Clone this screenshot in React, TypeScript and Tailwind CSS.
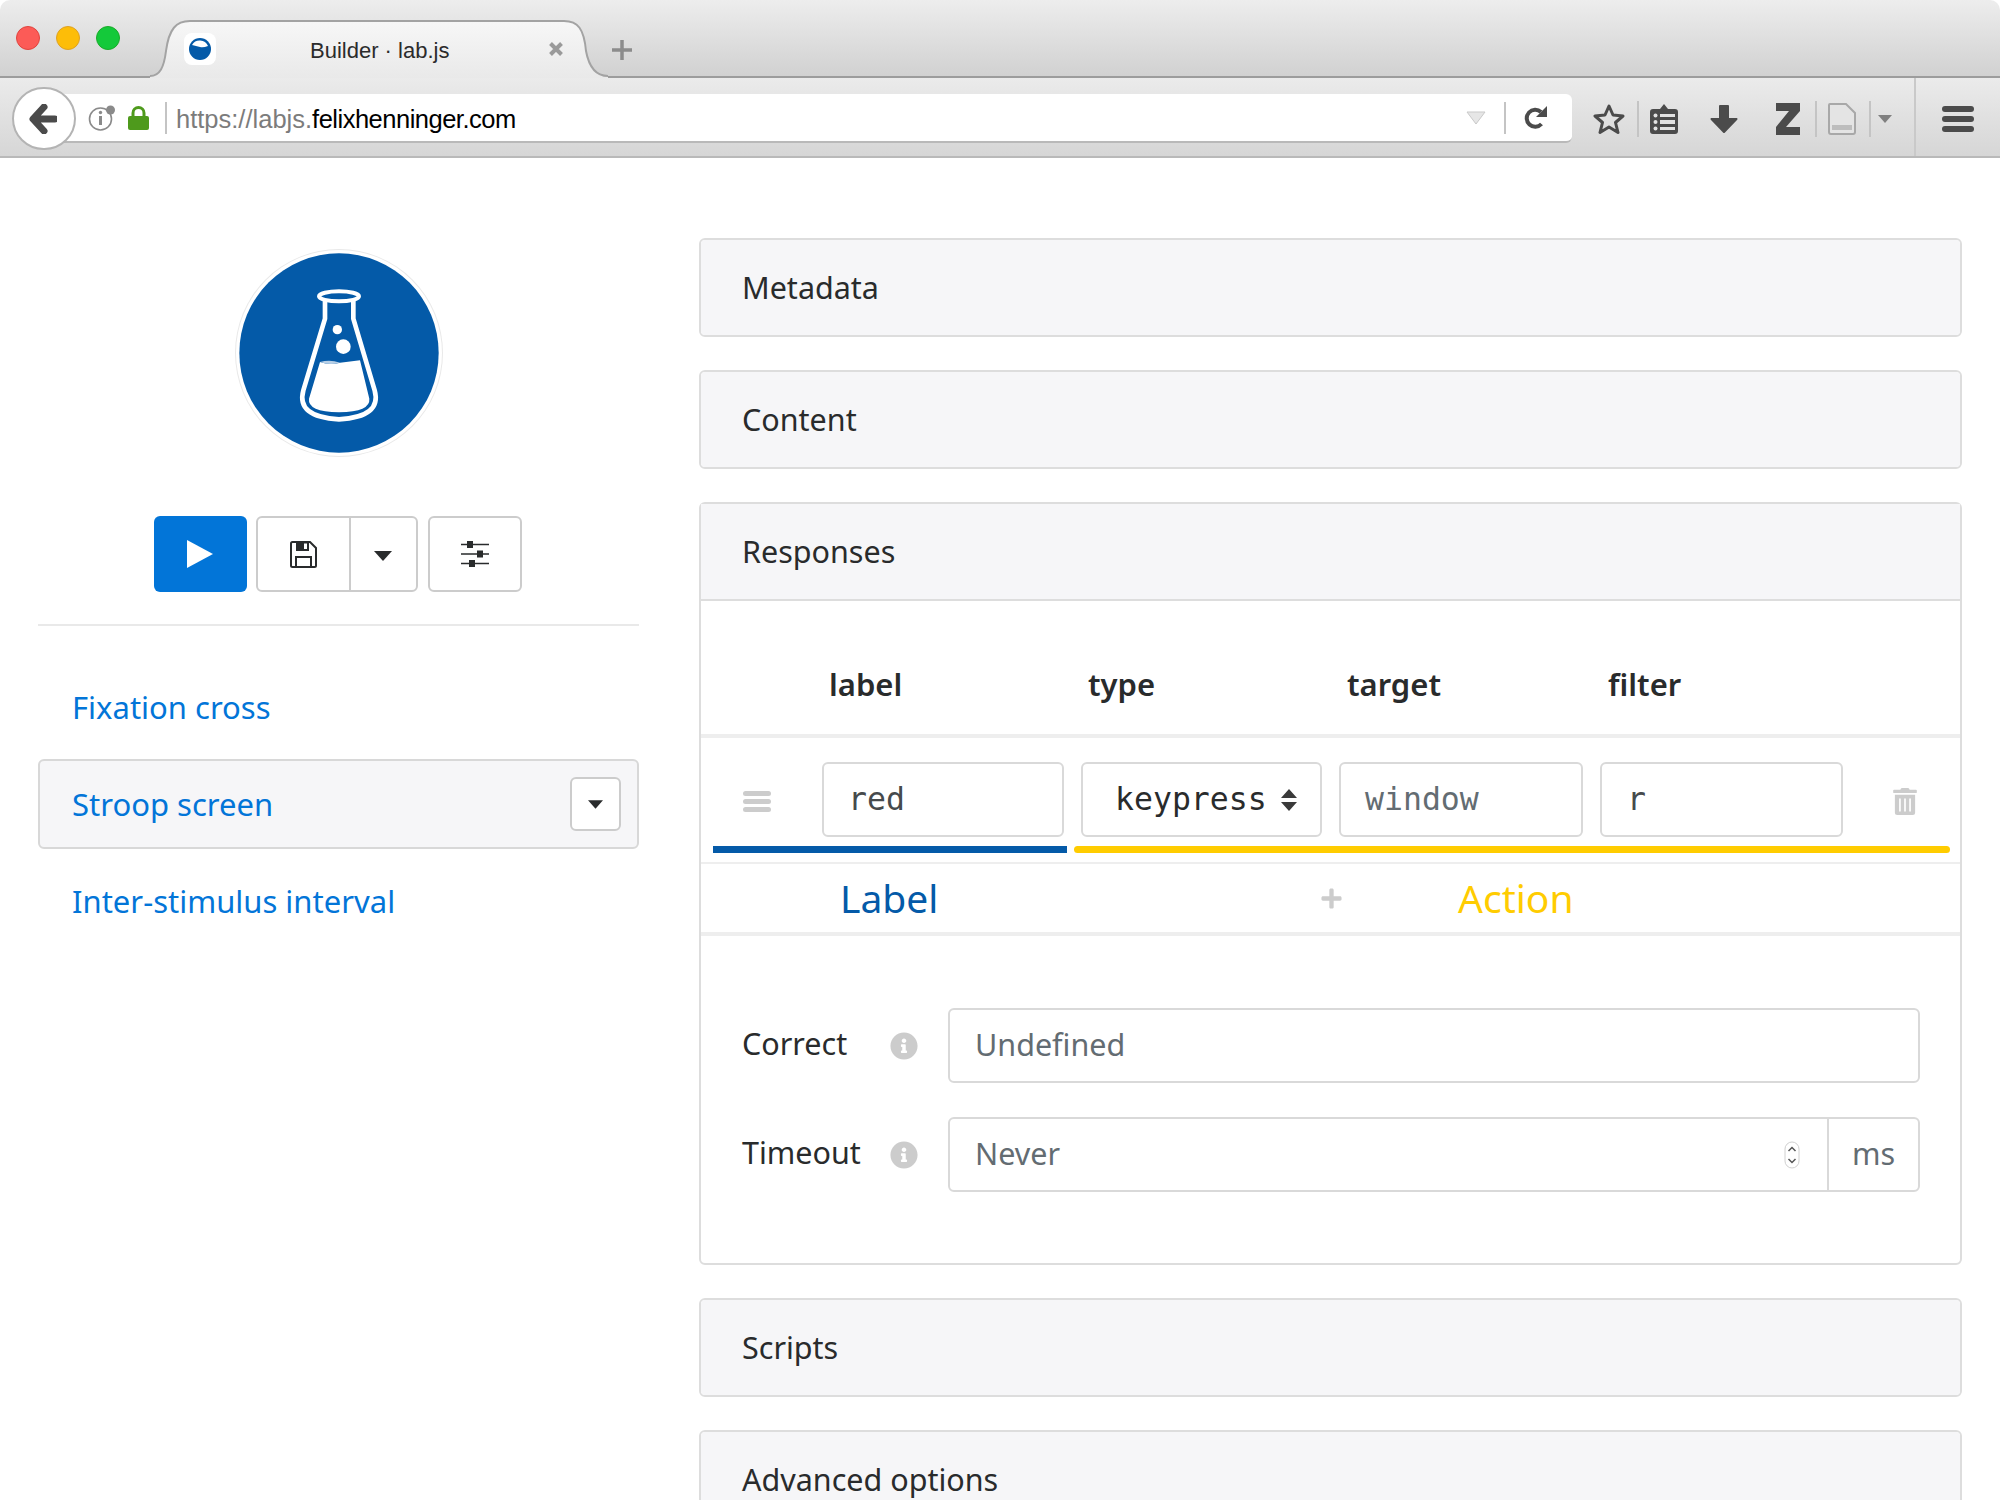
import React from "react";
import { FaInfoCircle, FaPlus, FaTrashAlt } from "react-icons/fa";

const sans = "font-['Noto_Sans',sans-serif]";

function Flask() {
  return (
    <svg viewBox="315 56 624 624" className="w-[208px] h-[208px]">
      <circle cx="627" cy="368" r="312" fill="#e9e9e9" />
      <circle cx="627" cy="368" r="309" fill="#fff" />
      <circle cx="627" cy="368" r="299" fill="#045aa8" />
      <ellipse cx="627" cy="198" rx="60" ry="15" fill="none" stroke="#fff" strokeWidth="12" />
      <path d="M585 212V265L520 480Q498 560 627 567Q756 560 734 480L670 265V212" fill="none" stroke="#fff" strokeWidth="14" />
      <path d="M570 395Q600 405 630 397L690 390L718 505Q722 544 627 546Q532 544 537 505Z" fill="#fff" />
      <path d="M570 395Q600 386 630 397Q600 406 570 395Z" fill="#b7cfe6" />
      <circle cx="622" cy="298" r="14" fill="#fff" />
      <circle cx="640" cy="349" r="22" fill="#fff" />
    </svg>
  );
}

function Caret({ className }: { className: string }) {
  return (
    <svg viewBox="0 0 18 10" className={className}>
      <path d="M0 0H18L9 10Z" fill="#292b2c" />
    </svg>
  );
}

function Floppy() {
  return (
    <svg viewBox="0 0 27 27" className="w-[27px] h-[27px]">
      <path d="M2.5 1H20L26 7V24.5Q26 26 24.5 26H2.5Q1 26 1 24.5V2.5Q1 1 2.5 1Z" fill="none" stroke="#292b2c" strokeWidth="2" />
      <path d="M6 1H19V10H6Z" fill="#292b2c" />
      <path d="M14 2.5H17V8H14Z" fill="#fff" />
      <path d="M6 26V16H21V26" fill="none" stroke="#292b2c" strokeWidth="2" />
    </svg>
  );
}

function Sliders() {
  return (
    <svg viewBox="0 0 28 26" className="w-[28px] h-[26px]">
      <path d="M0 3.5H28M0 13H28M0 22.5H28" stroke="#292b2c" strokeWidth="1.6" />
      <path d="M6 0H12V7H6ZM16 9.5H22V16.5H16ZM8 19H14V26H8Z" fill="#292b2c" />
    </svg>
  );
}

function Tab() {
  return (
    <div className="relative self-end z-10 -mb-[2px] ml-[20px] w-[478px] h-[59px] flex items-center">
      <svg viewBox="0 0 478 59" className="absolute inset-0 w-full h-full">
        <defs>
          <linearGradient id="tabfill" x1="0" y1="0" x2="0" y2="1">
            <stop offset="0" stopColor="#f7f7f7" />
            <stop offset="1" stopColor="#e9e9e9" />
          </linearGradient>
        </defs>
        <path d="M10 57C20 57 24 48 26 32C29 10 36 2 50 2H424C438 2 444 10 446 32C449 48 456 57 468 57V59H10Z" fill="url(#tabfill)" />
        <path d="M10 57C20 57 24 48 26 32C29 10 36 2 50 2H424C438 2 444 10 446 32C449 48 456 57 468 57" fill="none" stroke="#a3a3a3" strokeWidth="2" />
      </svg>
      <div className="relative ml-[44px] w-[32px] h-[32px] bg-white rounded-lg flex items-center justify-center">
        <svg viewBox="0 0 22 22" className="w-[22px] h-[22px]">
          <circle cx="11" cy="11" r="11" fill="#045aa8" />
          <path d="M3 7A9 9 0 0 1 19 8Q14 10 11 9Q7 8 3 7Z" fill="#fff" />
        </svg>
      </div>
      <span className="relative ml-[94px] pt-[4px] text-[22px] text-[#2b2b2b] font-['Liberation_Sans',sans-serif]">Builder · lab.js</span>
      <svg viewBox="0 0 16 16" className="relative ml-[99px] w-[16px] h-[16px]">
        <path d="M2.5 2.5L13.5 13.5M13.5 2.5L2.5 13.5" stroke="#9a9a9a" strokeWidth="4" />
      </svg>
    </div>
  );
}

function Sep({ className }: { className: string }) {
  return <div className={`w-[2px] bg-[#c4c4c4] ${className}`} />;
}

function Toolbar() {
  return (
    <div className="h-[80px] flex items-center pl-[12px] pt-[3px] bg-gradient-to-b from-[#ebebeb] to-[#d6d6d6] border-b-2 border-[#b9b9b9] font-['Liberation_Sans',sans-serif]">
      <div className="relative z-10 w-[64px] h-[63px] -mr-[16px] pr-[3px] rounded-full bg-white border-2 border-[#b4b4b4] flex items-center justify-center">
        <svg viewBox="0 0 28 30" className="w-[28px] h-[30px]">
          <path d="M15 3L4 15L15 27M5 15H26" fill="none" stroke="#4b4b4b" strokeWidth="7" strokeLinejoin="round" strokeLinecap="round" />
        </svg>
      </div>
      <div className="w-[1512px] h-[49px] bg-white rounded-r-md border-b-2 border-[#b9b9b9] flex items-center pr-[24px]">
        <svg viewBox="0 0 28 26" className="ml-[28px] w-[28px] h-[26px]">
          <circle cx="12.5" cy="14" r="11" fill="#fff" stroke="#8a8a8a" strokeWidth="1.6" />
          <path d="M12.5 11V20" stroke="#8a8a8a" strokeWidth="3" />
          <circle cx="12.5" cy="7.5" r="1.7" fill="#8a8a8a" />
          <circle cx="22.5" cy="5" r="4.5" fill="#8a8a8a" />
        </svg>
        <svg viewBox="0 0 21 24" className="ml-[12px] w-[21px] h-[24px]">
          <path d="M5 11V7A5.5 5.5 0 0 1 16 7V11" fill="none" stroke="#4e9a1c" strokeWidth="3" />
          <rect x="0" y="10" width="21" height="14" rx="2" fill="#4e9a1c" />
        </svg>
        <Sep className="ml-[16px] h-[32px]" />
        <span className="ml-[9px] pt-[4px] text-[25.5px] text-[#7c7c7c] tracking-[0px]">
          https://labjs.<span className="text-black tracking-[-0.5px]">felixhenninger.com</span>
        </span>
        <svg viewBox="0 0 20 14" className="ml-auto w-[20px] h-[14px]">
          <path d="M1 1H19L10 13Z" fill="#e6e6e6" stroke="#c9c9c9" />
        </svg>
        <Sep className="ml-[18px] h-[32px]" />
        <svg viewBox="0 0 24 24" className="ml-[18px] w-[24px] h-[24px]">
          <path d="M17.5 18A8.5 8.5 0 1 1 17 6" fill="none" stroke="#4b4b4b" strokeWidth="4" />
          <path d="M23 0V11H12Z" fill="#4b4b4b" />
        </svg>
      </div>
      <svg viewBox="0 0 32 32" className="ml-[21px] w-[32px] h-[32px]">
        <path d="M16 3L20 12L30 13L22.5 19.5L25 29.5L16 24L7 29.5L9.5 19.5L2 13L12 12Z" fill="none" stroke="#4b4b4b" strokeWidth="3" strokeLinejoin="round" />
      </svg>
      <Sep className="ml-[12px] h-[36px] bg-[#b5b5b5]" />
      <svg viewBox="0 0 28 30" className="ml-[11px] w-[28px] h-[30px]">
        <path d="M3 5H10L14 0L18 5H25Q28 5 28 8V27Q28 30 25 30H3Q0 30 0 27V8Q0 5 3 5Z" fill="#4b4b4b" />
        <path d="M10 10H25V13H10ZM10 16H25V20H10ZM10 23H25V26H10Z" fill="#e2e2e2" />
        <circle cx="5.5" cy="11.5" r="2" fill="#e2e2e2" />
        <circle cx="5.5" cy="18" r="2" fill="#e2e2e2" />
        <circle cx="5.5" cy="24.5" r="2" fill="#e2e2e2" />
      </svg>
      <svg viewBox="0 0 28 28" className="ml-[32px] w-[28px] h-[28px]">
        <path d="M9 1Q9 0 10 0H18Q19 0 19 1V13H27Q28 14 27 15L15 27.5Q14 28.5 13 27.5L1 15Q0 14 1 13H9Z" fill="#4b4b4b" />
      </svg>
      <svg viewBox="0 0 24 32" className="ml-[38px] w-[24px] h-[32px]">
        <path d="M0 0H24V8L10 24H24V32H0V24L13 8H0Z" fill="#4b4b4b" />
      </svg>
      <Sep className="ml-[15px] h-[36px] bg-[#b5b5b5]" />
      <svg viewBox="0 0 28 32" className="ml-[11px] w-[28px] h-[32px]">
        <path d="M2 1H18L27 10V29Q27 31 25 31H3Q1 31 1 29V2Q1 1 2 1Z" fill="#e4e4e4" stroke="#a8a8a8" strokeWidth="2" />
        <path d="M4 22H24V27H4Z" fill="#bdbdbd" />
      </svg>
      <Sep className="ml-[13px] h-[36px] bg-[#b5b5b5]" />
      <svg viewBox="0 0 14 8" className="ml-[7px] w-[14px] h-[8px]">
        <path d="M0 0H14L7 8Z" fill="#808080" />
      </svg>
      <Sep className="ml-[22px] -mt-[3px] self-stretch bg-[#c9c9c9]" />
      <div className="ml-[26px] w-[32px] flex flex-col gap-[4px]">
        <div className="h-[6px] rounded-full bg-[#4b4b4b]" />
        <div className="h-[6px] rounded-full bg-[#4b4b4b]" />
        <div className="h-[6px] rounded-full bg-[#4b4b4b]" />
      </div>
    </div>
  );
}

function Browser() {
  return (
    <div>
      <div className="h-[78px] flex rounded-t-[10px] bg-gradient-to-b from-[#ededed] to-[#d1d1d1] border-b-2 border-[#9c9c9c]">
        <div className="ml-[16px] mt-[26px] flex gap-[16px] self-start">
          <div className="w-[24px] h-[24px] rounded-full bg-[#fc5b57] border border-[#e0443e]" />
          <div className="w-[24px] h-[24px] rounded-full bg-[#fdbd08] border border-[#dea123]" />
          <div className="w-[24px] h-[24px] rounded-full bg-[#14c93a] border border-[#1aab29]" />
        </div>
        <Tab />
        <svg viewBox="0 0 20 20" className="relative z-20 self-end mb-[16px] -ml-[6px] w-[20px] h-[20px]">
          <path d="M10 0V20M0 10H20" stroke="#8c8c8c" strokeWidth="3.5" />
        </svg>
      </div>
      <Toolbar />
    </div>
  );
}

function Sidebar() {
  return (
    <div className="w-[601px] shrink-0 pt-[11px] flex flex-col">
      <div className="pl-[1px] flex justify-center">
        <Flask />
      </div>
      <div className="mt-[59px] pr-[2px] flex justify-center gap-[9px]">
        <div className="w-[93px] h-[76px] rounded-md bg-[#0275d8] flex items-center justify-center">
          <svg viewBox="0 0 26 28" className="w-[26px] h-[28px]">
            <path d="M0 0L26 14L0 28Z" fill="#fff" />
          </svg>
        </div>
        <div className="w-[162px] h-[76px] rounded-md border-2 border-[#cccccc] flex">
          <div className="w-[93px] border-r-2 border-[#cccccc] flex items-center justify-center">
            <Floppy />
          </div>
          <div className="flex-1 pt-[3px] flex items-center justify-center">
            <Caret className="w-[18px] h-[10px]" />
          </div>
        </div>
        <div className="ml-[1px] w-[94px] h-[76px] rounded-md border-2 border-[#cccccc] flex items-center justify-center">
          <Sliders />
        </div>
      </div>
      <div className="mt-[32px] h-[2px] bg-[#e9e9e9]" />
      <div className={`mt-[36px] flex flex-col gap-[7px] text-[31px] text-[#0275d8] ${sans}`}>
        <div className="h-[90px] pl-[34px] flex items-center">Fixation cross</div>
        <div className="h-[90px] pl-[32px] pr-[16px] flex items-center justify-between rounded-md bg-[#f6f6f8] border-2 border-[#d8d8d8]">
          Stroop screen
          <div className="w-[51px] h-[54px] rounded-md bg-white border-2 border-[#cccccc] flex items-center justify-center">
            <Caret className="w-[15px] h-[9px]" />
          </div>
        </div>
        <div className="h-[90px] pl-[34px] flex items-center">Inter-stimulus interval</div>
      </div>
    </div>
  );
}

function CardHeader({ title }: { title: string }) {
  return <div className={`h-[95px] pl-[41px] flex items-center bg-[#f6f6f8] text-[30.5px] text-[#292b2c] ${sans}`}>{title}</div>;
}

function Card({ title }: { title: string }) {
  return (
    <div className="rounded-md border-2 border-[#dddddd] overflow-hidden shrink-0">
      <CardHeader title={title} />
    </div>
  );
}

function Field({ children, className }: { children: React.ReactNode; className: string }) {
  return <div className={`h-[75px] rounded-md border-2 border-[#d9d9d9] flex items-center ${className}`}>{children}</div>;
}

function Responses() {
  const mono = "font-['DejaVu_Sans_Mono',monospace] text-[31.5px]";
  return (
    <div className="rounded-md border-2 border-[#dddddd] shrink-0">
      <div className="border-b-2 border-[#dddddd]">
        <CardHeader title="Responses" />
      </div>
      <div className={`h-[137px] pl-[121px] pt-[33px] flex gap-[17px] items-center border-b-4 border-[#eeeeee] text-[31px] font-semibold text-[#292b2c] ${sans}`}>
        <div className="w-[242px] pl-[7px]">label</div>
        <div className="w-[241px] pl-[7px]">type</div>
        <div className="w-[244px] pl-[8px]">target</div>
        <div className="w-[243px] pl-[8px]">filter</div>
      </div>
      <div className="relative h-[126px] pl-[121px] pt-[24px] flex gap-[17px] border-b-2 border-[#eeeeee]">
        <div className="absolute left-[42px] top-[53px] w-[28px] flex flex-col gap-[3px]">
          <div className="h-[5px] rounded-sm bg-[#cccccc]" />
          <div className="h-[5px] rounded-sm bg-[#cccccc]" />
          <div className="h-[5px] rounded-sm bg-[#cccccc]" />
        </div>
        <Field className={`w-[242px] pl-[24px] text-[#464a4c] ${mono}`}>red</Field>
        <Field className={`w-[241px] pl-[32px] text-[#292b2c] ${mono}`}>
          keypress
          <svg viewBox="0 0 16 22" className="ml-[14px] w-[16px] h-[22px]">
            <path d="M8 0L16 9H0ZM8 22L0 13H16Z" fill="#3a3a3a" />
          </svg>
        </Field>
        <Field className={`w-[244px] pl-[24px] text-[#636c72] ${mono}`}>window</Field>
        <Field className={`w-[243px] pl-[25px] text-[#464a4c] ${mono}`}>r</Field>
        <FaTrashAlt className="ml-[33px] mt-[26px] w-[24px] h-[27px] text-[#cccccc]" />
        <div className="absolute left-[12px] bottom-[9px] w-[354px] h-[7px] bg-[#045aa8]" />
        <div className="absolute left-[373px] bottom-[9px] w-[876px] h-[7px] rounded-full bg-[#ffcc00]" />
      </div>
      <div className={`h-[72px] flex items-center border-b-4 border-[#eeeeee] text-[39px] ${sans}`}>
        <span className="ml-[139px] w-[480px] text-[#045aa8]">Label</span>
        <FaPlus className="w-[23px] h-[23px] text-[#cccccc]" />
        <span className="ml-[115px] text-[#ffcc00]">Action</span>
      </div>
      <div className={`pt-[72px] pb-[71px] pl-[41px] pr-[40px] flex flex-col gap-[34px] text-[30.5px] ${sans}`}>
        <div className="flex items-center">
          <span className="w-[148px] pb-[3px] text-[#292b2c]">Correct</span>
          <FaInfoCircle className="w-[28px] h-[28px] text-[#cccccc]" />
          <Field className="ml-[30px] flex-1 pl-[25px] pb-[1px] text-[#636c72]">Undefined</Field>
        </div>
        <div className="flex items-center">
          <span className="w-[148px] pb-[4px] text-[#292b2c]">Timeout</span>
          <FaInfoCircle className="w-[28px] h-[28px] text-[#cccccc]" />
          <Field className="ml-[30px] flex-1 pl-[25px] text-[#636c72]">
            <span className="pb-[2px]">Never</span>
            <svg viewBox="0 0 16 28" className="ml-auto w-[16px] h-[28px]">
              <rect x="1" y="1" width="14" height="26" rx="7" fill="#fff" stroke="#d0d0d0" />
              <path d="M4.5 10L8 6.5L11.5 10M4.5 18L8 21.5L11.5 18" fill="none" stroke="#555" strokeWidth="1.5" />
            </svg>
            <div className="ml-[27px] w-[91px] pb-[2px] self-stretch border-l-2 border-[#d9d9d9] flex items-center justify-center">ms</div>
          </Field>
        </div>
      </div>
    </div>
  );
}

export default function App() {
  return (
    <div className="h-[1500px] overflow-hidden bg-white">
      <Browser />
      <div className="pt-[80px] pl-[38px] flex gap-[60px]">
        <Sidebar />
        <div className="w-[1263px] flex flex-col gap-[33px]">
          <Card title="Metadata" />
          <Card title="Content" />
          <Responses />
          <Card title="Scripts" />
          <Card title="Advanced options" />
        </div>
      </div>
    </div>
  );
}
